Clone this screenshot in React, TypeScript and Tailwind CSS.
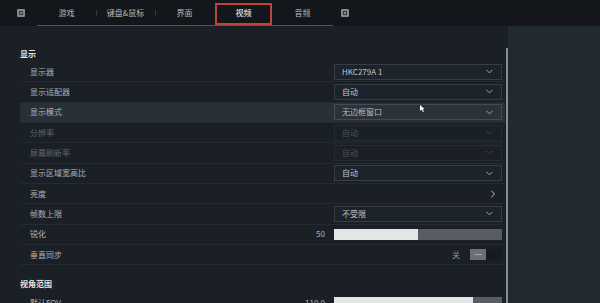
import { ChevronDown, ChevronRight } from "lucide-react";

type Row =
  | { label: string; kind: "select"; value: string; disabled?: boolean; active?: boolean }
  | { label: string; kind: "link" }
  | { label: string; kind: "slider"; value: string; pct: number }
  | { label: string; kind: "toggle" };

const tabs = ["游戏", "键盘&鼠标", "界面", "视频", "音频"];

const displayRows: Row[] = [
  { label: "显示器", kind: "select", value: "HKC279A 1" },
  { label: "显示适配器", kind: "select", value: "自动" },
  { label: "显示模式", kind: "select", value: "无边框窗口", active: true },
  { label: "分辨率", kind: "select", value: "自动", disabled: true },
  { label: "屏幕刷新率", kind: "select", value: "自动", disabled: true },
  { label: "显示区域宽高比", kind: "select", value: "自动" },
  { label: "亮度", kind: "link" },
  { label: "帧数上限", kind: "select", value: "不受限" },
  { label: "锐化", kind: "slider", value: "50", pct: 50 },
  { label: "垂直同步", kind: "toggle" },
];

function KeyHint() {
  return (
    <div className="w-[8px] h-[8px] bg-[#85898e] rounded-[1px] flex items-center justify-center">
      <div className="w-[4px] h-[4px] border border-[#3a3e43]" />
    </div>
  );
}

function SettingRow({ row }: { row: Row }) {
  const disabled = row.kind === "select" && row.disabled;
  const active = row.kind === "select" && row.active;
  return (
    <div
      className={`h-[20.33px] flex items-center border-b border-[#242a31] ${
        active ? "bg-[#293037]" : ""
      }`}
    >
      <div
        className={`pl-[10px] flex-1 ${
          disabled ? "text-[#60666c]" : "text-[#aeb2b6]"
        }`}
      >
        {row.label}
      </div>
      {row.kind === "select" && (
        <div
          className={`w-[168px] h-[16px] mr-[3px] flex items-center justify-between pl-[7px] pr-[6px] border ${
            disabled
              ? "border-[#262c33] text-[#4c5258]"
              : active
                ? "border-[#454b52] bg-[#2c3239] text-[#b4b8bc]"
                : "border-[#373d44] bg-[#1d232a] text-[#c0c4c8]"
          }`}
        >
          <span>{row.value}</span>
          <ChevronDown
            className={`w-[11px] h-[11px] ${disabled ? "text-[#41474d]" : "text-[#aeb2b6]"}`}
            strokeWidth={2}
          />
        </div>
      )}
      {row.kind === "link" && (
        <ChevronRight className="w-[12px] h-[12px] mr-[6px] text-[#c0c4c8]" strokeWidth={2} />
      )}
      {row.kind === "slider" && (
        <div className="flex items-center mr-[3px]">
          <span className="text-[#b0b4b8] mr-[9px]">{row.value}</span>
          <div className="w-[168px] h-[11px] bg-[#575d63] flex">
            <div className="h-full bg-[#e4e5e6]" style={{ width: `${row.pct}%` }} />
          </div>
        </div>
      )}
      {row.kind === "toggle" && (
        <div className="flex items-center mr-[3px]">
          <span className="text-[#8a8e92] mr-[10px]">关</span>
          <div className="w-[32px] h-[11px] flex">
            <div className="w-[16px] h-full bg-[#6c7075] flex items-center justify-center">
              <div className="w-[7px] h-[1px] bg-[#a4a8ac]" />
            </div>
            <div className="w-[16px] h-full bg-[#171b20]" />
          </div>
        </div>
      )}
    </div>
  );
}

export default function App() {
  return (
    <div
      className="w-[600px] h-[303px] overflow-hidden bg-[#1b2027] flex flex-col text-[8px] leading-none relative"
      style={{ fontFamily: '"Noto Sans CJK SC", "Noto Sans", sans-serif' }}
    >
      {/* Tabs */}
      <div className="h-[26px] bg-[#13161a] flex items-center shrink-0">
        <div className="w-[37px] flex justify-center pl-[10px] pr-[6px]">
          <KeyHint />
        </div>
        <div className="flex h-full border-b border-[#50565c] w-[296px]">
          {tabs.map((t, i) => (
            <div
              key={t}
              className={`w-[59px] h-full flex items-center justify-center relative ${
                i === 3 ? "text-white" : "text-[#b4b8bc]"
              }`}
            >
              {i === 3 && (
                <div className="absolute left-[1px] right-[1px] top-[3px] bottom-[0px] border-2 border-[#c0443e]" />
              )}
              {i > 0 && i !== 3 && i !== 4 && (
                <div className="absolute left-0 top-[10px] w-px h-[6px] bg-[#33383e]" />
              )}
              {t}
            </div>
          ))}
        </div>
        <div className="ml-[8px]">
          <KeyHint />
        </div>
      </div>

      <div className="flex flex-1 min-h-0">
        {/* Settings list */}
        <div className="w-[505px] pl-[20px] pt-[24px]">
          <div className="text-[#e4e4e4] font-bold h-[12px]">显示</div>
          {displayRows.map((r) => (
            <SettingRow key={r.label} row={r} />
          ))}
          <div className="text-[#e4e4e4] font-bold mt-[15px] h-[13px]">视角范围</div>
          <SettingRow row={{ label: "默认FOV", kind: "slider", value: "110.0", pct: 83 }} />
        </div>
        {/* Scrollbar */}
        <div className="w-[3px] pt-[22px] flex justify-center">
          <div className="w-[2px] h-full bg-[#888d92]" />
        </div>
        <div className="flex-1 bg-[#212a31]" />
      </div>

      {/* Cursor */}
      <svg className="absolute left-[420px] top-[105px]" width="5" height="7" viewBox="0 0 5 7">
        <path d="M0 0 L0 6 L1.5 4.6 L3 7 L4 6.5 L2.6 4.2 L4.5 4 Z" fill="#ffffff" />
      </svg>
    </div>
  );
}
